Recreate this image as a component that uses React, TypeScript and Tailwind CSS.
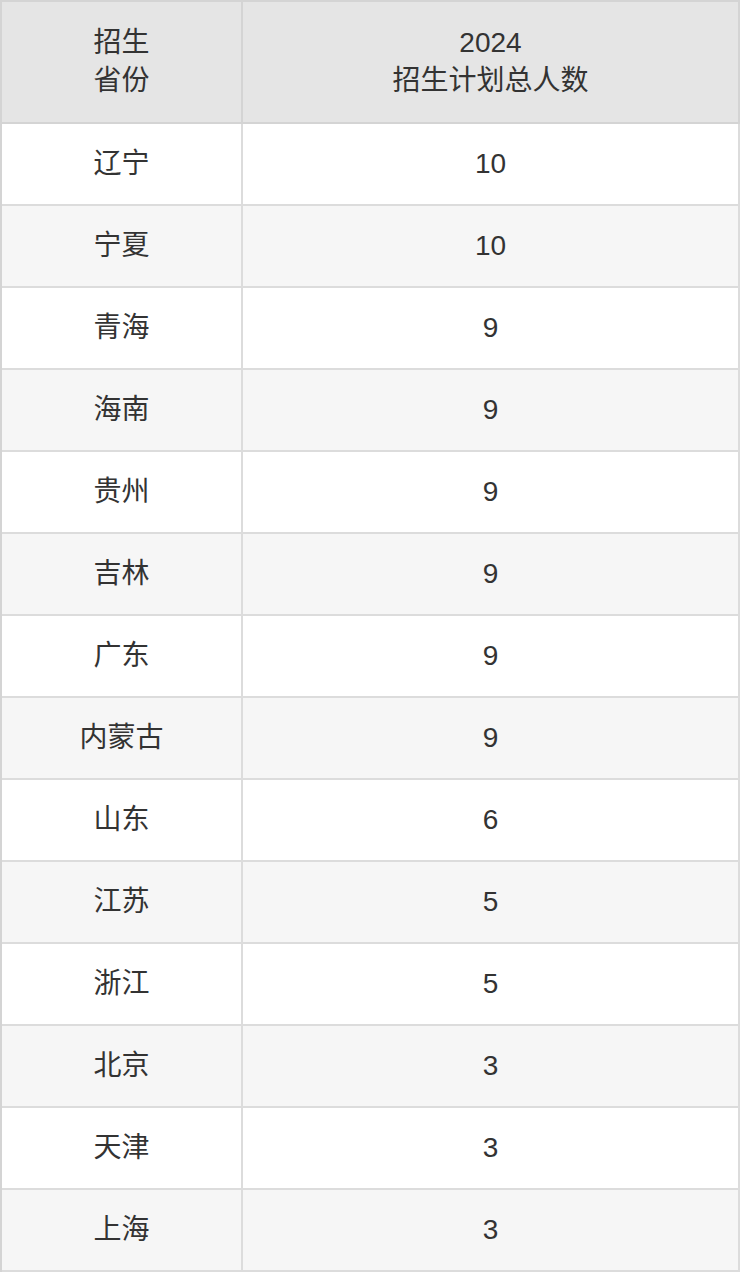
import React from "react";

// 2024 admission plan by province
const rows: [string, number][] = [
  ["辽宁", 10],
  ["宁夏", 10],
  ["青海", 9],
  ["海南", 9],
  ["贵州", 9],
  ["吉林", 9],
  ["广东", 9],
  ["内蒙古", 9],
  ["山东", 6],
  ["江苏", 5],
  ["浙江", 5],
  ["北京", 3],
  ["天津", 3],
  ["上海", 3],
];

export default function App() {
  return (
    <div
      className="w-[740px] bg-white text-[#333] text-[28px]"
      style={{ fontFamily: '"Liberation Sans", "Noto Sans CJK SC", sans-serif' }}
    >
      <div className="grid grid-cols-[241px_1fr] border-t-2 border-l-2 border-[#d4d4d4]">
        {/* header */}
        <div className="h-[122px] flex flex-col items-center justify-center bg-[#e5e5e5] border-r-2 border-b-2 border-[#d4d4d4] leading-[38px]">
          <span>招生</span>
          <span>省份</span>
        </div>
        <div className="h-[122px] flex flex-col items-center justify-center bg-[#e5e5e5] border-r-2 border-b-2 border-[#d4d4d4] leading-[38px]">
          <span>2024</span>
          <span>招生计划总人数</span>
        </div>

        {rows.map(([province, count], i) => (
          <React.Fragment key={province}>
            <div
              className={
                "h-[82px] flex items-center justify-center border-r-2 border-b-2 border-[#dcdcdc] " +
                (i % 2 === 0 ? "bg-white" : "bg-[#f6f6f6]")
              }
            >
              {province}
            </div>
            <div
              className={
                "h-[82px] flex items-center justify-center border-r-2 border-b-2 border-[#dcdcdc] " +
                (i % 2 === 0 ? "bg-white" : "bg-[#f6f6f6]")
              }
            >
              {count}
            </div>
          </React.Fragment>
        ))}
      </div>
    </div>
  );
}
